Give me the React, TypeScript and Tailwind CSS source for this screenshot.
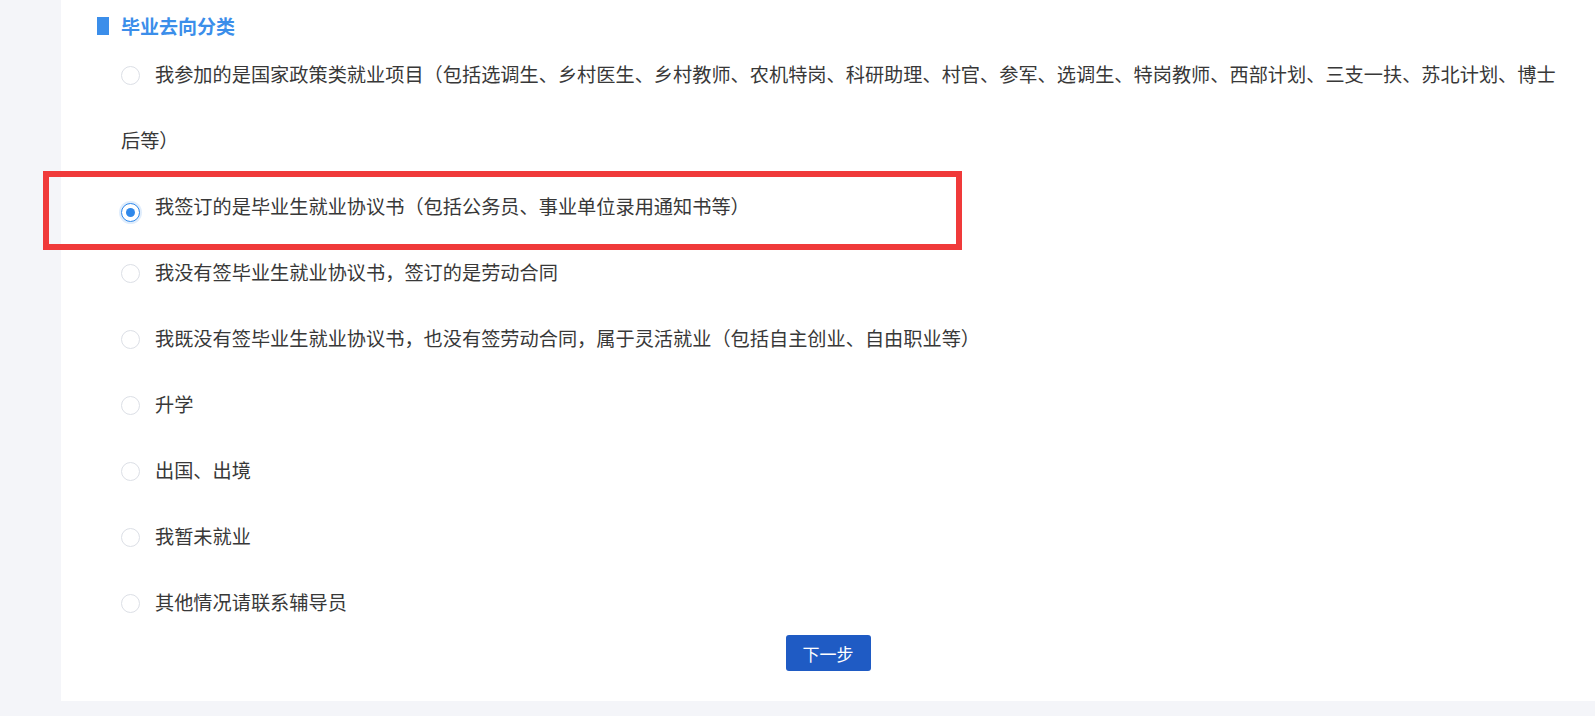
const options = [
  '我参加的是国家政策类就业项目（包括选调生、乡村医生、乡村教师、农机特岗、科研助理、村官、参军、选调生、特岗教师、西部计划、三支一扶、苏北计划、博士后等）',
  '我签订的是毕业生就业协议书（包括公务员、事业单位录用通知书等）',
  '我没有签毕业生就业协议书，签订的是劳动合同',
  '我既没有签毕业生就业协议书，也没有签劳动合同，属于灵活就业（包括自主创业、自由职业等）',
  '升学',
  '出国、出境',
  '我暂未就业',
  '其他情况请联系辅导员',
];

function Radio({ checked }: { checked: boolean }) {
  return (
    <span
      className={
        'inline-flex items-center justify-center w-[19px] h-[19px] rounded-full border bg-white align-[-3px] mr-[15px] ' +
        (checked ? 'border-[#2f88ea] shadow-[0_0_0_2px_rgba(47,136,234,0.15)]' : 'border-[#dcdfe6]')
      }
    >
      {checked && <span className="w-[9px] h-[9px] rounded-full bg-[#2f88ea]" />}
    </span>
  );
}

export default function App() {
  const selected = 1;
  return (
    <div className="relative min-h-screen bg-[#f4f5f9] pl-[61px] pb-[14px] font-['Noto_Sans_CJK_SC',sans-serif]">
      <div className="bg-white pt-[13px] pb-[30px] pr-[29px]">
        <div className="flex items-center pl-[36px] leading-[26px]">
          <span className="w-[12px] h-[18px] bg-[#3b8eea] mr-[12px]" />
          <span className="text-[19px] font-bold text-[#3b8eea]">毕业去向分类</span>
        </div>

        <div className="mt-[2px] pl-[60px]">
          {options.map((text, i) => (
            <label key={i} className="block text-[19.2px] leading-[66px] text-[#383838] cursor-pointer">
              <Radio checked={i === selected} />
              {text}
            </label>
          ))}
        </div>

        <div className="flex justify-center pl-[29px]">
          <button className="w-[85px] h-[36px] rounded-[3px] bg-[#1f5bc4] text-white text-[17px] leading-none">
            下一步
          </button>
        </div>
      </div>

      <div className="absolute left-[43px] top-[171px] w-[919px] h-[79px] border-[6px] border-[#f03a3a]" />
    </div>
  );
}
